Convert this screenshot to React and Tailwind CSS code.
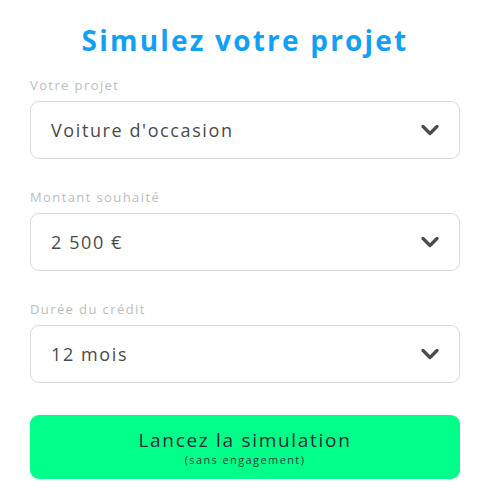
const fields = [
  { label: 'Votre projet', value: "Voiture d'occasion" },
  { label: 'Montant souhaité', value: '2 500 €' },
  { label: 'Durée du crédit', value: '12 mois' },
];

const Chevron = () => (
  <svg width="18" height="12" viewBox="0 0 18 12" fill="none">
    <path d="M2 2.5 L9 9.5 L16 2.5" stroke="#4a4a4a" strokeWidth="3.2" strokeLinecap="round" strokeLinejoin="round" />
  </svg>
);

export default function App() {
  return (
    <div className="w-[488px] h-[503px] bg-white pl-[30px] pt-[21px]" style={{ fontFamily: '"Open Sans", "Liberation Sans", sans-serif' }}>
      <div className="w-[430px]">
        <h1 className="text-center text-[28px] font-bold leading-[38px] tracking-[2.2px] text-[#12a0f4]">Simulez votre projet</h1>

        <div className="mt-[18px] flex flex-col gap-[30px]">
          {fields.map((f) => (
            <div key={f.label}>
              <div className="text-[13px] leading-[16px] tracking-[1.4px] text-[#bdbdbd]">{f.label}</div>
              <div className="mt-[8px] flex h-[58px] items-center justify-between rounded-[9px] border border-[#dadada] pl-[20px] pr-[20px]">
                <span className="text-[18px] tracking-[1.6px] text-[#4a4a4a]">{f.value}</span>
                <Chevron />
              </div>
            </div>
          ))}
        </div>

        <button className="mt-[32px] flex h-[64px] w-full flex-col items-center justify-center rounded-[9px] bg-[#00ff88]">
          <span className="block text-[19px] leading-[26px] tracking-[1.7px] text-[#2b2b36]">Lancez la simulation</span>
          <span className="-mt-[1px] block text-[11px] leading-[15px] tracking-[1.4px] text-[#3a3a46]">(sans engagement)</span>
        </button>
      </div>
    </div>
  );
}
